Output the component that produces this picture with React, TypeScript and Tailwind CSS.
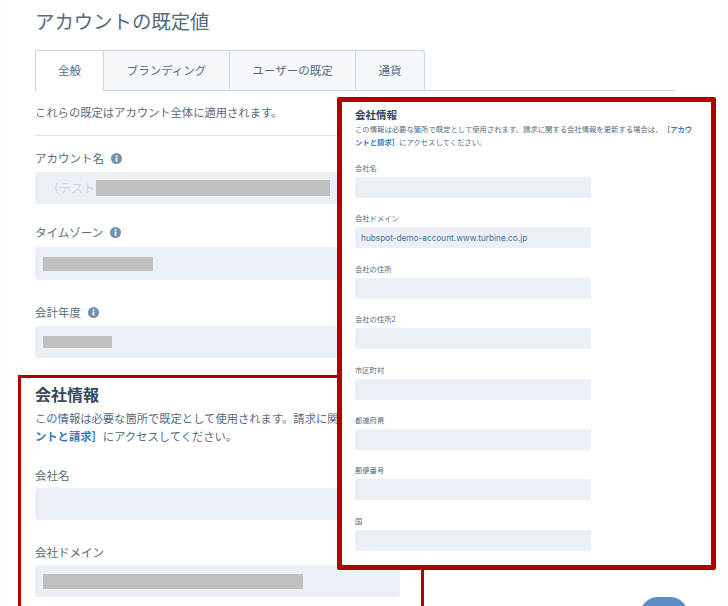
const font = "font-['Noto_Sans_CJK_JP','Noto_Sans',sans-serif]";

function Info() {
  return (
    <svg width="11" height="11" viewBox="0 0 11 11" className="shrink-0">
      <circle cx="5.5" cy="5.5" r="5.5" fill="#7390ab" />
      <rect x="4.6" y="4.6" width="1.8" height="4" fill="#fff" />
      <rect x="4.6" y="2.2" width="1.8" height="1.6" fill="#fff" />
    </svg>
  );
}

function Label({ text, info }: { text: string; info?: boolean }) {
  return (
    <div className="flex items-center gap-[7px] h-[20px] text-[11.5px] leading-[20px] text-[#566b80]">
      <span>{text}</span>
      {info && <Info />}
    </div>
  );
}

function BigField({ children, h = "h-[32px]" }: { children?: React.ReactNode; h?: string }) {
  return <div className={`${h} w-[365px] rounded-[3px] bg-[#eaf0f6] flex items-center pl-[8px]`}>{children}</div>;
}

function Tab({ label, w, active, extra }: { label: string; w: string; active?: boolean; extra?: string }) {
  return (
    <div
      className={`${w} ${extra ?? ""} flex items-center justify-center text-[11.5px] text-[#566b80] border-t border-r border-[#cbd6e2] ${
        active ? "bg-white border-l h-[41px] -mb-px" : "bg-[#f5f8fa] h-[40px]"
      }`}
    >
      {label}
    </div>
  );
}

function SmallField({ label, value }: { label: string; value?: string }) {
  return (
    <div className="flex flex-col">
      <div className="h-[14px] mb-[2px] text-[7.3px] leading-[14px] text-[#566b80]">{label}</div>
      <div className="h-[21px] w-[236px] rounded-[1px] bg-[#eaf0f6] flex items-center pl-[6px] text-[8.25px] text-[#516f90] font-['Inter','Noto_Sans_CJK_JP',sans-serif]">
        {value}
      </div>
    </div>
  );
}

export default function App() {
  return (
    <div className={`relative w-[728px] h-[606px] overflow-hidden bg-[#fdfdfd] ${font}`}>
      <div className="ml-[8px] mr-[1px] h-full bg-white pl-[27px] pt-[7px] pr-[52px]">
        <h1 className="text-[19.4px] leading-[28px] text-[#566b80] font-normal">アカウントの既定値</h1>
        <div className="mt-[15px] flex border-b border-[#cbd6e2]">
          <Tab label="全般" w="w-[69px]" active extra="rounded-tl-[3px]" />
          <Tab label="ブランディング" w="w-[126px]" />
          <Tab label="ユーザーの既定" w="w-[126px]" />
          <Tab label="通貨" w="w-[69px]" extra="rounded-tr-[3px]" />
        </div>
        <p className="mt-[11px] text-[11.3px] leading-[20px] text-[#566b80]">これらの既定はアカウント全体に適用されます。</p>
        <div className="mt-[13px] border-t border-[#dfe3eb]" />
        <div className="mt-[12px]">
          <Label text="アカウント名" info />
          <div className="mt-[4px]">
            <BigField>
              <span className="ml-[4px] w-[49px] text-[12px] text-[#cfd8e3] whitespace-nowrap">（テスト</span>
              <div className="h-[16px] w-[234px] bg-[#c0c0c0]" />
            </BigField>
          </div>
        </div>
        <div className="mt-[18px]">
          <Label text="タイムゾーン" info />
          <div className="mt-[5px]">
            <BigField h="h-[33px]">
              <div className="h-[14px] w-[110px] bg-[#c0c0c0]" />
            </BigField>
          </div>
        </div>
        <div className="mt-[22px]">
          <Label text="会計年度" info />
          <div className="mt-[4px]">
            <BigField>
              <div className="h-[12px] w-[69px] bg-[#c0c0c0]" />
            </BigField>
          </div>
        </div>
        <div className="mt-[25px]">
          <h2 className="text-[16px] leading-[22px] font-bold text-[#33475b]">会社情報</h2>
          <p className="mt-[4px] text-[11.3px] leading-[18px] text-[#566b80] w-[390px]">
            この情報は必要な箇所で既定として使用されます。請求に関
            <br />
            <span className="font-bold text-[#3b7bb8]">ントと請求］</span>にアクセスしてください。
          </p>
          <div className="mt-[20px]">
            <Label text="会社名" />
            <div className="mt-[3px]"><BigField /></div>
          </div>
          <div className="mt-[22px]">
            <Label text="会社ドメイン" />
            <div className="mt-[3px]">
              <BigField>
                <div className="h-[15px] w-[260px] bg-[#c0c0c0]" />
              </BigField>
            </div>
          </div>
        </div>
      </div>

      <div className="absolute left-[18px] top-[375px] w-[406px] h-[260px] border-[3px] border-[#b00000] pointer-events-none" />

      <div className="absolute left-[337px] top-[97px] w-[379px] h-[473px] border-[5px] border-[#b00000] rounded-[2px] bg-white pl-[13px] pt-[6px]">
        <h3 className="text-[10.5px] leading-[14px] font-bold text-[#33475b]">会社情報</h3>
        <p className="text-[7.35px] leading-[13.4px] text-[#566b80] whitespace-nowrap">
          この情報は必要な箇所で既定として使用されます。請求に関する会社情報を更新する場合は、
          <span className="ml-[4px] font-bold text-[#3b7bb8]">［アカウ</span>
          <br />
          <span className="font-bold text-[#3b7bb8]">ントと請求］</span>にアクセスしてください。
        </p>
        <div className="mt-[12px] flex flex-col gap-[13.45px]">
          <SmallField label="会社名" />
          <SmallField label="会社ドメイン" value="hubspot-demo-account.www.turbine.co.jp" />
          <SmallField label="会社の住所" />
          <SmallField label="会社の住所2" />
          <SmallField label="市区町村" />
          <SmallField label="都道府県" />
          <SmallField label="郵便番号" />
          <SmallField label="国" />
        </div>
      </div>

      <div className="absolute left-[640px] top-[597px] w-[48px] h-[40px] rounded-[18px] bg-[#5b8cc4]" />
    </div>
  );
}
